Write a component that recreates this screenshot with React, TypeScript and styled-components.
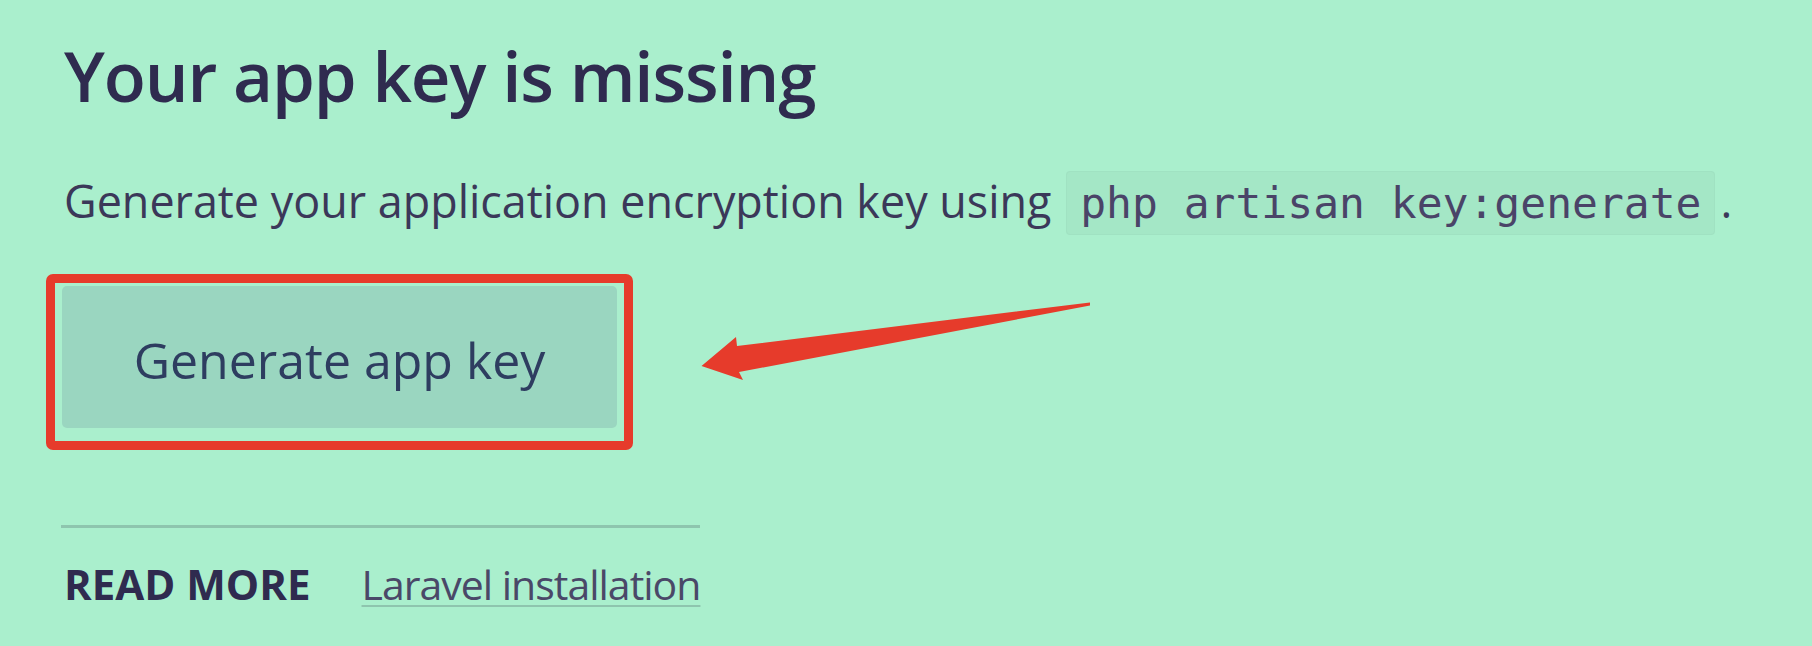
import React from 'react';
import { createGlobalStyle, styled } from 'styled-components';

const GlobalStyle = createGlobalStyle`
  html, body {
    margin: 0;
    padding: 0;
    background: #aaefcd;
  }
`;

export default function App() {
  return (
    <>
      <GlobalStyle />
      <StPage>
        <StTitle>Your app key is missing</StTitle>
        <StText>
          Generate your application encryption key using{' '}
          <StCode>php artisan key:generate</StCode>.
        </StText>

        <StActionRow>
          <StHighlight>
            <StButton type="button">Generate app key</StButton>
          </StHighlight>
          {/* 빨간 화살표 표시 */}
          <StArrow width="400" height="90" viewBox="0 0 400 90">
            <path
              d="M6.5 69 L41 40 L42 49 L395 5.5 L395 8.5 L44 75 L48 83 Z"
              fill="#e63b2b"
            />
          </StArrow>
        </StActionRow>

        <StDivider />

        <StFooter>
          <StLabel>READ MORE</StLabel>
          <StLink href="#">Laravel installation</StLink>
        </StFooter>
      </StPage>
    </>
  );
}

const StPage = styled.div`
  min-height: 646px;
  box-sizing: border-box;
  padding: 33px 0 0 64px;
  background: #aaefcd;
  font-family: 'Open Sans', 'Noto Sans', sans-serif;
  color: #2f2b4f;
`;

const StTitle = styled.h1`
  margin: 0;
  font-size: 69px;
  line-height: 84px;
  font-weight: 600;
  letter-spacing: -1.1px;
  color: #2f2b4f;
`;

const StText = styled.p`
  margin: 53px 0 0;
  font-size: 44.9px;
  line-height: 62px;
  color: #3b3859;
  white-space: nowrap;
`;

const StCode = styled.code`
  font-family: 'DejaVu Sans Mono', 'Liberation Mono', monospace;
  font-size: 43px;
  color: #4a4468;
  background: #a4e7c6;
  border: 1px solid #a0e2c2;
  border-radius: 4px;
  padding: 6px 13px;
  margin-left: 3px;
  margin-right: 5px;
`;

const StActionRow = styled.div`
  display: flex;
  align-items: flex-start;
  margin: 40px 0 0 -18px;
`;

const StHighlight = styled.div`
  border: 9px solid #e63b2b;
  border-radius: 7px;
  padding: 3px 7px 13px 7px;
`;

const StButton = styled.button`
  display: flex;
  align-items: center;
  justify-content: center;
  width: 555px;
  height: 142px;
  padding: 6px 0 0;
  border: none;
  border-radius: 5px;
  background: #9ad6c0;
  font-family: 'Open Sans', 'Noto Sans', sans-serif;
  font-size: 50px;
  color: #2e3d60;
`;

const StArrow = styled.svg`
  display: block;
  margin: 23px 0 0 62px;
`;

const StDivider = styled.div`
  width: 639px;
  height: 3px;
  margin: 75px 0 0 -3px;
  background: #8ec5ae;
`;

const StFooter = styled.div`
  display: flex;
  align-items: baseline;
  gap: 51px;
  margin-top: 26px;
  font-size: 42px;
  line-height: 60px;
`;

const StLabel = styled.span`
  font-weight: 700;
  color: #2f2b4f;
`;

const StLink = styled.a`
  font-size: 41px;
  letter-spacing: -1px;
  color: #4a4868;
  text-decoration: underline;
  text-decoration-color: #8ec5ae;
  text-decoration-thickness: 2px;
  text-underline-offset: 5px;
`;
